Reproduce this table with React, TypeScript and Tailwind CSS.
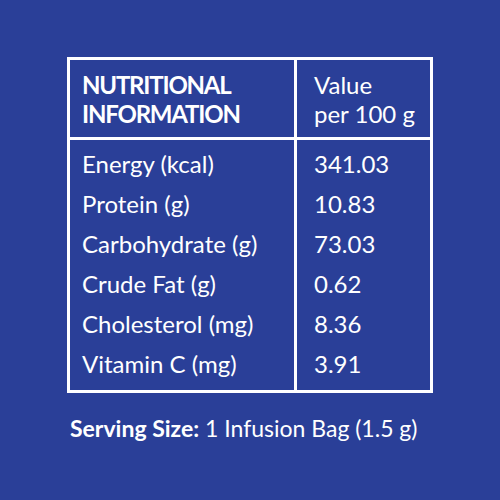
import React from 'react';

const rows = [
  { label: 'Energy (kcal)', value: '341.03' },
  { label: 'Protein (g)', value: '10.83' },
  { label: 'Carbohydrate (g)', value: '73.03' },
  { label: 'Crude Fat (g)', value: '0.62' },
  { label: 'Cholesterol (mg)', value: '8.36' },
  { label: 'Vitamin C (mg)', value: '3.91' },
];

export default function App() {
  return (
    <div className="w-[500px] h-[500px] bg-[#2a3f98] text-white font-['Lato',sans-serif] overflow-hidden">
      <div className="pt-[57px] pl-[67px]">
        {/* Table */}
        <div className="w-[366px] border-[3px] border-white">
          <div className="flex border-b-[3px] border-white">
            <div className="w-[227px] border-r-[3px] border-white pl-3 pt-[10px] pb-[9px] text-[24px] leading-[29px] font-bold tracking-[-1.2px]">
              <div>NUTRITIONAL</div>
              <div>INFORMATION</div>
            </div>
            <div className="flex-1 pl-[17px] pt-[10px] pb-[9px] text-[24px] leading-[29px]">
              <div>Value</div>
              <div>per 100 g</div>
            </div>
          </div>
          <div className="flex">
            <div className="w-[227px] border-r-[3px] border-white pl-3 pt-1 pb-[6px] text-[24px] leading-[40px]">
              {rows.map((r) => (
                <div key={r.label}>{r.label}</div>
              ))}
            </div>
            <div className="flex-1 pl-[17px] pt-1 pb-[6px] text-[24px] leading-[40px]">
              {rows.map((r) => (
                <div key={r.label}>{r.value}</div>
              ))}
            </div>
          </div>
        </div>
      </div>
      {/* Serving size */}
      <div className="mt-[19px] pl-[70px] text-[23px] leading-[32px]">
        <span className="font-bold">Serving Size:</span> 1 Infusion Bag (1.5 g)
      </div>
    </div>
  );
}
